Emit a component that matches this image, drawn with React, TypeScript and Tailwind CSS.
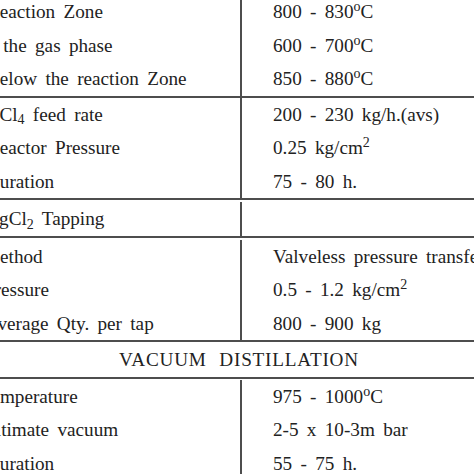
import * as React from "react";

type Row = {
  label: React.ReactNode;
  value?: React.ReactNode;
  // how far the label runs past the left edge of the crop
  shift: string;
};

const deg = <sup className="text-[14px]">o</sup>;

const groups: { pad: string; rows: Row[] }[] = [
  {
    pad: "-mt-[5px]",
    rows: [
      { label: "Reaction Zone", value: <>800 - 830{deg}C</>, shift: "-ml-[13px]" },
      { label: "In the gas phase", value: <>600 - 700{deg}C</>, shift: "-ml-[21px]" },
      { label: "Below the reaction Zone", value: <>850 - 880{deg}C</>, shift: "-ml-[13px]" },
    ],
  },
  {
    pad: "pt-0",
    rows: [
      {
        label: <>TiCl<sub className="text-[14px]">4</sub> feed rate</>,
        value: "200 - 230 kg/h.(avs)",
        shift: "-ml-[17px]",
      },
      { label: "Reactor Pressure", value: <>0.25 kg/cm<sup className="text-[14px]">2</sup></>, shift: "-ml-[13px]" },
      { label: "Duration", value: "75 - 80 h.", shift: "-ml-[14px]" },
    ],
  },
  {
    pad: "pt-[2px]",
    rows: [
      { label: <>MgCl<sub className="text-[14px]">2</sub> Tapping</>, shift: "-ml-[18px]" },
    ],
  },
  {
    pad: "pt-[2px]",
    rows: [
      { label: "Method", value: "Valveless pressure transfer", shift: "-ml-[17px]" },
      { label: "Pressure", value: <>0.5 - 1.2 kg/cm<sup className="text-[14px]">2</sup></>, shift: "-ml-[16px]" },
      { label: "Average Qty. per tap", value: "800 - 900 kg", shift: "-ml-[15px]" },
    ],
  },
];

const vacuum: Row[] = [
  { label: "Temperature", value: <>975 - 1000{deg}C</>, shift: "-ml-[19px]" },
  { label: "Ultimate vacuum", value: "2-5 x 10-3m bar", shift: "-ml-[18px]" },
  { label: "Duration", value: "55 - 75 h.", shift: "-ml-[14px]" },
];

function Group({ rows, pad, last }: { rows: Row[]; pad: string; last?: boolean }) {
  return (
    <div className={`flex ${pad} ${last ? "" : "border-b-2 border-[#4d4d4d]"}`}>
      <div className="w-[242px] shrink-0 overflow-hidden border-r-2 border-[#4d4d4d]">
        {rows.map((r, i) => (
          <div key={i} className={`h-[33.5px] whitespace-nowrap ${r.shift}`}>
            {r.label}
          </div>
        ))}
      </div>
      <div className="pl-[31px]">
        {rows.map((r, i) => (
          <div key={i} className="h-[33.5px] whitespace-nowrap">
            {r.value ?? ""}
          </div>
        ))}
      </div>
    </div>
  );
}

export default function App() {
  return (
    <div className="h-[474px] w-full overflow-hidden bg-white font-['Liberation_Serif',serif] text-[19.2px] leading-[33.5px] text-[#222] [word-spacing:3.5px]">
      {groups.map((g, i) => (
        <Group key={i} rows={g.rows} pad={g.pad} />
      ))}
      <div className="pt-[1px] border-b-2 border-[#4d4d4d]">
        <div className="h-[33.5px] pl-[4px] text-center tracking-[0.8px] [word-spacing:7px]">VACUUM DISTILLATION</div>
      </div>
      <Group rows={vacuum} pad="pt-[1px]" last />
    </div>
  );
}
